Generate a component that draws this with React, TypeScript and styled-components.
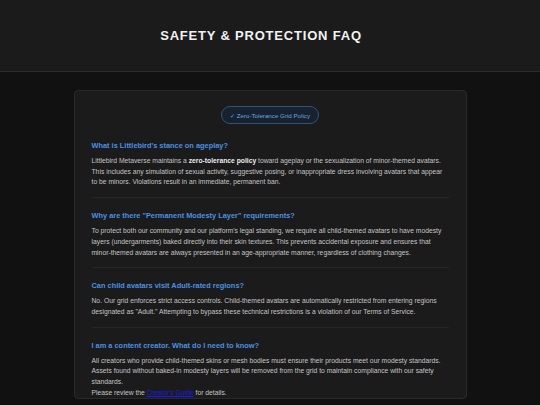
import React from 'react'
import styled, { createGlobalStyle } from 'styled-components'

const GlobalStyle = createGlobalStyle`
  html, body {
    margin: 0;
    padding: 0;
    background: #111111;
    font-family: "Liberation Sans", Arial, sans-serif;
  }
`

const Page = styled.div`
  min-height: 405px;
  background: #111111;
`

const Header = styled.header`
  height: 72px;
  background: #1b1b1b;
  border-bottom: 1px solid #2c2c2c;
  display: flex;
  align-items: center;
  justify-content: center;
  box-sizing: border-box;
  padding: 0 18px 1px 0;
`

const Title = styled.h1`
  margin: 0;
  color: #f2f2f2;
  font-size: 13px;
  font-weight: 700;
  letter-spacing: 0.8px;
`

const Card = styled.main`
  width: 393px;
  margin: 18px auto 0;
  box-sizing: border-box;
  background: #1b1b1b;
  border: 1px solid #2a2a2a;
  border-radius: 4px;
  padding: 15px 17px 0;
`

const BadgeRow = styled.div`
  display: flex;
  justify-content: center;
  margin-bottom: 4px;
`

const Badge = styled.span`
  display: inline-flex;
  align-items: center;
  height: 18px;
  box-sizing: border-box;
  padding: 0 8px;
  border: 1px solid #2e5578;
  border-radius: 9px;
  background: #17222e;
  color: #6aa6e0;
  font-size: 6.2px;
`

const FaqItem = styled.section<{ $last?: boolean }>`
  padding: 13px 0 ${(p) => (p.$last ? '0' : '9px')};
  border-bottom: ${(p) => (p.$last ? 'none' : '1px solid #262626')};
`

const Question = styled.h3`
  margin: 0 0 5px;
  color: #4a90e2;
  font-size: 7.4px;
  line-height: 10px;
  font-weight: 700;
`

const Answer = styled.p`
  margin: 0;
  color: #c4c4c4;
  font-size: 6.75px;
  line-height: 10.7px;

  & strong {
    color: #ececec;
  }

  & a {
    color: #1a1aee;
  }
`

const App = (): JSX.Element => {
  return (
    <Page>
      <GlobalStyle />
      <Header>
        <Title>SAFETY &amp; PROTECTION FAQ</Title>
      </Header>

      <Card>
        <BadgeRow>
          <Badge>✓ Zero-Tolerance Grid Policy</Badge>
        </BadgeRow>

        <FaqItem>
          <Question>What is Littlebird's stance on ageplay?</Question>
          <Answer>
            Littlebird Metaverse maintains a <strong>zero-tolerance policy</strong> toward
            ageplay or the sexualization of minor-themed avatars. This includes any
            simulation of sexual activity, suggestive posing, or inappropriate dress
            involving avatars that appear to be minors. Violations result in an
            immediate, permanent ban.
          </Answer>
        </FaqItem>

        <FaqItem>
          <Question>Why are there "Permanent Modesty Layer" requirements?</Question>
          <Answer>
            To protect both our community and our platform's legal standing, we require
            all child-themed avatars to have modesty layers (undergarments) baked
            directly into their skin textures. This prevents accidental exposure and
            ensures that minor-themed avatars are always presented in an
            age-appropriate manner, regardless of clothing changes.
          </Answer>
        </FaqItem>

        <FaqItem>
          <Question>Can child avatars visit Adult-rated regions?</Question>
          <Answer>
            No. Our grid enforces strict access controls. Child-themed avatars are
            automatically restricted from entering regions designated as "Adult."
            Attempting to bypass these technical restrictions is a violation of our
            Terms of Service.
          </Answer>
        </FaqItem>

        <FaqItem $last>
          <Question>I am a content creator. What do I need to know?</Question>
          <Answer>
            All creators who provide child-themed skins or mesh bodies must ensure their
            products meet our modesty standards. Assets found without baked-in modesty
            layers will be removed from the grid to maintain compliance with our safety
            standards.
            <br />
            Please review the <a href="#guide">Creator's Guide</a> for details.
          </Answer>
        </FaqItem>
      </Card>
    </Page>
  )
}

export default App
